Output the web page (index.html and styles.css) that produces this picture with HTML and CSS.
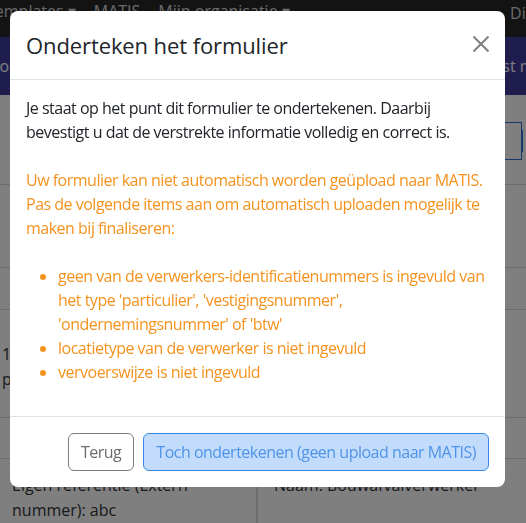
FILE: index.html
```html
<!DOCTYPE html>
<html lang="nl">
<head>
<meta charset="utf-8">
<title>Onderteken het formulier</title>
<link rel="stylesheet" href="styles.css">
</head>
<body>
<div class="page">
  <nav class="topnav">
    <span class="nav-item nav-first">Templates ▾</span>
    <span class="nav-item">MATIS</span>
    <span class="nav-item">Mijn organisatie ▾</span>
    <span class="nav-spacer"></span>
    <span class="nav-item nav-right">Digitaal</span>
  </nav>
  <div class="subbar">
    <span class="sub-left">Document</span>
    <span class="sub-right">Laatst mod</span>
  </div>
  <main class="content">
    <div class="row row-a">
      <span class="tab-box">Actie</span>
    </div>
    <div class="row row-b"></div>
    <div class="row row-c"></div>
    <div class="row row-d">
      <span class="cut-text">1<br>p</span>
    </div>
    <div class="row row-e"></div>
    <div class="row row-f">
      <div class="cell cell-left">Eigen referentie (Extern nummer): abc</div>
      <div class="cell cell-right">Naam: Bouwafvalverwerker</div>
    </div>
  </main>
</div>

<div class="backdrop"></div>

<div class="modal" role="dialog" aria-labelledby="modal-title">
  <div class="modal-header">
    <h5 class="modal-title" id="modal-title">Onderteken het formulier</h5>
    <button class="close-btn" aria-label="Sluiten">
      <svg width="18" height="18" viewBox="0 0 18 18"><path d="M1.5 1.5 L16.5 16.5 M16.5 1.5 L1.5 16.5" stroke="currentColor" stroke-width="2" fill="none"/></svg>
    </button>
  </div>
  <div class="modal-body">
    <p class="intro">Je staat op het punt dit formulier te ondertekenen. Daarbij bevestigt u dat de verstrekte informatie volledig en correct is.</p>
    <div class="warning">
      <p class="warning-text">Uw formulier kan niet automatisch worden geüpload naar MATIS. Pas de volgende items aan om automatisch uploaden mogelijk te maken bij finaliseren:</p>
      <ul class="warning-list">
        <li>geen van de verwerkers-identificatienummers is ingevuld van het type 'particulier', 'vestigingsnummer', 'ondernemingsnummer' of 'btw'</li>
        <li>locatietype van de verwerker is niet ingevuld</li>
        <li>vervoerswijze is niet ingevuld</li>
      </ul>
    </div>
  </div>
  <div class="modal-footer">
    <button class="btn btn-secondary">Terug</button>
    <button class="btn btn-primary">Toch ondertekenen (geen upload naar MATIS)</button>
  </div>
</div>
</body>
</html>
```

FILE: styles.css
```css
* { box-sizing: border-box; }

html, body {
  margin: 0;
  padding: 0;
  width: 526px;
  height: 523px;
  overflow: hidden;
  font-family: "Open Sans", "Noto Sans", "Liberation Sans", sans-serif;
  font-size: 16px;
  line-height: 24px;
  color: #333;
  background: #fff;
}

.page {
  display: flex;
  flex-direction: column;
  height: 523px;
}

.topnav {
  flex-shrink: 0;
  height: 37px;
  background: #262626;
  display: flex;
  align-items: flex-start;
  color: #d4d4d4;
  font-size: 16px;
  line-height: 22px;
  white-space: nowrap;
  overflow: hidden;
}

.nav-item { margin-right: 18px; }
.nav-first { margin-left: -14px; }
.nav-spacer { flex: 1; }
.nav-right { margin-right: -40px; margin-top: 2px; }

.subbar {
  flex-shrink: 0;
  height: 58px;
  background: #3e389d;
  color: #fff;
  display: flex;
  justify-content: space-between;
  align-items: center;
  white-space: nowrap;
  overflow: hidden;
}

.sub-left { margin-left: -12px; }
.sub-right { margin-right: -28px; }

.content {
  flex: 1;
  display: flex;
  flex-direction: column;
  overflow: hidden;
}

.row {
  flex-shrink: 0;
  border-bottom: 1px solid #d9d9d9;
}

.row-a { height: 90px; display: flex; justify-content: flex-end; padding-top: 27px; }
.row-b { height: 83px; }
.row-c { height: 42px; }
.row-d { height: 108px; padding: 32px 0 0 2px; }
.row-e { height: 41px; }
.row-f { flex: 1 0 auto; display: flex; border-bottom: none; }

.tab-box {
  height: 38px;
  width: 30px;
  border: 1px solid #2f6fd6;
  color: #333;
  padding: 6px 0 0 2px;
  margin-right: 4px;
  overflow: hidden;
  text-indent: -30px;
  box-shadow: 9px 0 0 -8px #2f6fd6;
}

.cut-text { display: block; line-height: 25px; }

.cell {
  padding: 14px 12px 0;
  line-height: 25px;
}
.cell-left { width: 258px; border-right: 2px solid #ddd; }
.cell-right { flex: 1; padding-left: 16px; }

.backdrop {
  position: fixed;
  inset: 0;
  background: rgba(0, 0, 0, 0.5);
}

.modal {
  position: fixed;
  left: 10px;
  top: 11px;
  width: 495px;
  background: #fff;
  border-radius: 8px;
  display: flex;
  flex-direction: column;
  color: #212529;
  letter-spacing: -0.5px;
}

.modal-header {
  display: flex;
  align-items: center;
  justify-content: space-between;
  padding: 16px 14px 16px 16px;
  border-bottom: 1px solid #dee2e6;
  height: 69px;
}

.modal-title {
  margin: 0;
  font-size: 22px;
  line-height: 36px;
  font-weight: 400;
  color: #212529;
  letter-spacing: -0.1px;
}

.close-btn {
  border: none;
  background: none;
  padding: 0;
  width: 20px;
  height: 20px;
  color: #808080;
  display: flex;
  align-items: center;
  justify-content: center;
  margin-top: -2px;
}

.modal-body {
  padding: 16px 8px 16px 16px;
}

.intro { margin: 0 0 24px; }

.warning { color: #f5921e; }
.warning-text { margin: 0 0 24px; }

.warning-list {
  margin: 0 0 16px;
  padding-left: 32px;
}

.modal-footer {
  border-top: 1px solid #dee2e6;
  display: flex;
  justify-content: flex-end;
  align-items: center;
  gap: 9px;
  padding: 16px;
}

.btn {
  font-family: inherit;
  font-size: 16px;
  line-height: 24px;
  padding: 6px 12px;
  border-radius: 6px;
  height: 38px;
  white-space: nowrap;
  letter-spacing: -0.5px;
}

.btn-secondary {
  background: #fff;
  border: 1px solid #7d7d7d;
  color: #6c6c6c;
}

.btn-primary {
  background: #c4dcfb;
  border: 1px solid #3a84e6;
  color: #4e94e8;
}
```
